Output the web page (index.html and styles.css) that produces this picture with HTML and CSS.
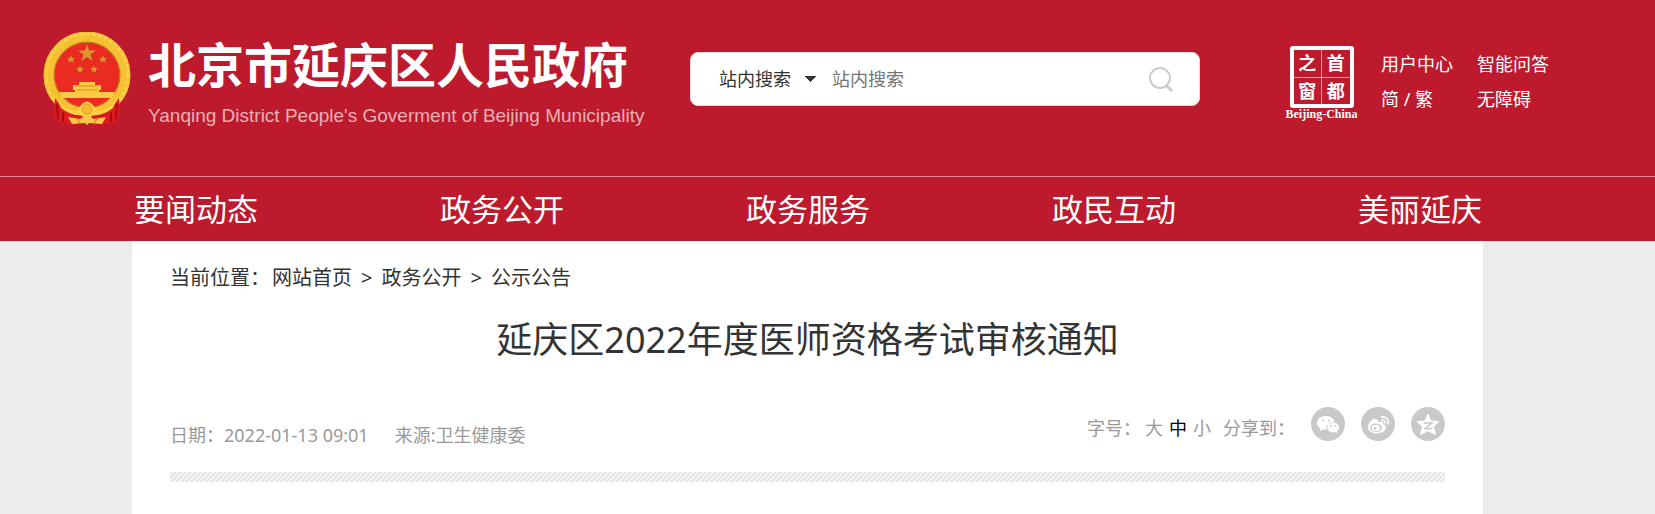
FILE: index.html
```
<!DOCTYPE html>
<html lang="zh-CN">
<head>
    <meta charset="UTF-8">
    <meta name="viewport" content="width=device-width, initial-scale=1.0">
    <title>延庆区2022年度医师资格考试审核通知</title>
    <link rel="stylesheet" href="styles.css">
</head>
<body>
    <header class="header">
        <a class="logo" href="#">
            <svg class="emblem" viewBox="0 0 88 94" aria-hidden="true">
                <circle cx="44" cy="43" r="38" fill="#ea2b22" stroke="#f6c033" stroke-width="11"/>
                <circle cx="44" cy="43" r="41" fill="none" stroke="#fbcf4c" stroke-width="3" stroke-dasharray="4 2"/>
                <circle cx="44" cy="43" r="33" fill="none" stroke="#b8731c" stroke-width="1"/>
                <path d="M44 12 L46 18.500 L53 18.500 L47.500 22.500 L49.500 29 L44 25 L38.500 29 L40.500 22.500 L35 18.500 L42 18.500 Z" fill="#d9992b"/>
                <g fill="#d9992b">
                    <path id="small-star" d="M28 23 L29 26 L32 26 L29.700 28 L30.500 31 L28 29 L25.500 31 L26.300 28 L24 26 L27 26 Z"/>
                    <use href="#small-star" x="32"/>
                    <use href="#small-star" x="9" y="10"/>
                    <use href="#small-star" x="23" y="10"/>
                </g>
                <path d="M36 50 H52 V53 H58 V58 H56 V60 H72 L69 66 H19 L16 60 H32 V58 H30 V53 H36 Z" fill="#fbca45"/>
                <path d="M32 54 H56 M34 58 H54" stroke="#d98b22" stroke-width="1"/>
                <path d="M12 66 Q22 82 40 84 L36 92 Q24 94 16 90 L11 84 Z M76 66 Q66 82 48 84 L52 92 Q64 94 72 90 L77 84 Z" fill="#dd1a1c"/>
                <path d="M14 72 L15 87 M20 80 L20 90 M74 72 L73 87 M68 80 L68 90" stroke="#a80d15" stroke-width="2"/>
                <path d="M14 66 Q22 79 34 79 L38 73 Q44 66 50 73 L54 79 Q66 79 74 66 L70 76 Q60 84 50 83 L44 80 L38 83 Q28 84 18 76 Z" fill="#ffd04a"/>
                <circle cx="44" cy="77" r="5" fill="#f5b932" stroke="#e0a02a"/>
                <path d="M25 85 L37 87 L44 83 L51 87 L63 85 L59 92 L46 91 L44 93 L42 91 L29 92 Z" fill="#f9c944"/>
                <path d="M34 87 L38 92 M54 87 L50 92" stroke="#b96f18"/>
            </svg>
            <span class="logo-text">
                <span class="logo-cn">北京市延庆区人民政府</span>
                <span class="logo-en">Yanqing District People's Goverment of Beijing Municipality</span>
            </span>
        </a>

        <form class="search">
            <select class="search-type" aria-label="搜索范围">
                <option>站内搜索</option>
            </select>
            <input class="search-input" type="text" placeholder="站内搜索" aria-label="站内搜索">
            <button class="search-btn" type="button" aria-label="搜索">
                <svg width="26" height="26" viewBox="0 0 26 26" fill="none" stroke="#ccc" stroke-width="2">
                    <circle cx="12" cy="12" r="10"/>
                    <path d="M18 19 L24 25" stroke-width="3"/>
                </svg>
            </button>
        </form>

        <div class="header-right">
            <a class="seal" href="#">
                <span class="seal-grid">
                    <span>之</span><span>首</span>
                    <span>窗</span><span>都</span>
                </span>
                <span class="seal-name">Beijing-China</span>
            </a>
            <div class="user-links">
                <a href="#">用户中心</a>
                <a href="#">智能问答</a>
                <a href="#">简 / 繁</a>
                <a href="#">无障碍</a>
            </div>
        </div>
    </header>

    <nav class="nav">
        <a href="#">要闻动态</a>
        <a href="#">政务公开</a>
        <a href="#">政务服务</a>
        <a href="#">政民互动</a>
        <a href="#">美丽延庆</a>
    </nav>

    <main class="content">
        <div class="crumbs">
            <span class="crumbs-label">当前位置：</span><a href="#">网站首页</a><span class="sep">&gt;</span><a href="#">政务公开</a><span class="sep">&gt;</span><a href="#">公示公告</a>
        </div>

        <h1>延庆区2022年度医师资格考试审核通知</h1>

        <div class="info">
            <div class="info-left">
                <span>日期：2022-01-13 09:01</span>
                <span>来源:卫生健康委</span>
            </div>
            <div class="info-right">
                <span class="size-label">字号：</span>
                <div class="sizes">
                    <button type="button">大</button>
                    <button type="button" class="active">中</button>
                    <button type="button">小</button>
                </div>
                <span class="share-label">分享到：</span>
                <div class="share">
                    <a href="#" aria-label="微信">
                        <svg viewBox="0 0 34 34">
                            <path d="M15 9 C9.500 9 6 12 6 16 C6 18.500 7.500 20.300 9.500 21.500 L9 24 L12 22.600 L15 23 C15 18.500 18.500 15.500 23.500 15.500 C23 11.500 19.500 9 15 9 Z" fill="#fff"/>
                            <path d="M22 15.500 C18.500 15.500 16 17.800 16 20.500 C16 23.500 18.500 25.500 22 25.500 L24 25.300 L27 26.500 L26.300 24.300 C27.500 23.300 28.300 22 28.300 20.500 C28.300 17.800 25.500 15.500 22 15.500 Z" fill="#fff" stroke="#c9c9c9" stroke-width="0.500"/>
                            <g fill="#c9c9c9"><circle cx="12" cy="13.500" r="1"/><circle cx="18" cy="13.500" r="1"/><circle cx="20" cy="19" r="1"/><circle cx="24.500" cy="19" r="1"/></g>
                        </svg>
                    </a>
                    <a href="#" aria-label="微博">
                        <svg viewBox="0 0 34 34" fill="none">
                            <path d="M15 12 C12 10.500 7 16 7 20 C7 24 11 26.500 15.500 26.500 C21 26.500 25 23.500 25 20.500 C25 18.500 23.500 17.600 22 17.300 C22.800 15 21.500 13.500 17 15.300 C17.400 13.500 16.800 12.300 15 12 Z" fill="#fff"/>
                            <ellipse cx="15" cy="20.800" rx="5.800" ry="4.300" fill="#c9c9c9"/>
                            <ellipse cx="14.800" cy="21" rx="4" ry="3.200" fill="#fff"/>
                            <circle cx="14" cy="21.500" r="1.400" fill="#c9c9c9"/>
                            <path d="M20 10.200 C25 8.800 28.500 12.500 27 17.500 M20.500 13.300 C23 12.600 24.700 14 24 16.600" stroke="#fff" stroke-width="1.500"/>
                        </svg>
                    </a>
                    <a href="#" aria-label="QQ空间">
                        <svg viewBox="0 0 34 34">
                            <path d="M17 7 L20 14 L28 14.500 L22.500 19.500 L24.500 27.500 L17 23.700 L9.500 27.500 L11.500 19.500 L6 14.500 L14 14 Z" fill="#fff" stroke="#fff" stroke-linejoin="round"/>
                            <path d="M12.500 16 H21 L14 21.500 Q18 22 21.500 21" fill="none" stroke="#c9c9c9" stroke-width="1.500"/>
                        </svg>
                    </a>
                </div>
            </div>
        </div>

        <div class="stripe"></div>
    </main>
</body>
</html>
```
FILE: styles.css
```
* {
    box-sizing: border-box;
    margin: 0;
    padding: 0;
}

body {
    font-family: "Noto Sans", "Noto Sans CJK SC", sans-serif;
    font-size: 18px;
    color: #333;
    background-color: #ececec;
    min-height: 100vh;
    display: flex;
    flex-direction: column;
}

a {
    color: inherit;
    text-decoration: none;
}

button, input, select {
    font: inherit;
    color: inherit;
    border: none;
    background: none;
    outline: none;
}

button {
    cursor: pointer;
}

/* header */
.header {
    display: flex;
    align-items: flex-start;
    padding: 32px 106px 44px 43px;
    background-color: #bd1a2d;
    color: #fff;
}

.logo {
    display: flex;
    gap: 17px;
    flex: none;
}

.emblem {
    width: 88px;
    height: 94px;
}

.logo-text {
    display: flex;
    flex-direction: column;
    gap: 8px;
    width: 492px;
    white-space: nowrap;
}

.logo-cn {
    font-family: "Noto Sans CJK SC", sans-serif;
    font-size: 48px;
    font-weight: bold;
    line-height: 60px;
}

.logo-en {
    font-family: "Liberation Sans", Arial, sans-serif;
    font-size: 19px;
    line-height: 32px;
    color: #eab0b7;
}

.search {
    flex: 1;
    display: flex;
    align-items: center;
    height: 54px;
    margin: 20px 86px 0 50px;
    padding: 0 25px 0 28px;
    background-color: #fff;
    border: 1px solid #ddd;
    border-radius: 8px;
    color: #333;
}

.search-type {
    appearance: none;
    width: 97px;
    background: linear-gradient(to bottom right, #333 50%, transparent 50%) right 0 center / 6px 6px no-repeat,
        linear-gradient(to bottom left, #333 50%, transparent 50%) right 6px center / 6px 6px no-repeat;
}

.search-input {
    flex: 1;
    min-width: 0;
    padding-left: 16px;
}

.search-input::placeholder {
    color: #757575;
}

.search-btn {
    display: flex;
}

.header-right {
    display: flex;
    flex: none;
    gap: 24px;
    padding-top: 14px;
}

.seal {
    display: flex;
    flex-direction: column;
    align-items: center;
    width: 71px;
}

.seal-grid {
    display: grid;
    grid-template-columns: 1fr 1fr;
    gap: 1px;
    width: 64px;
    height: 62px;
    border: 4px solid #fff;
    border-radius: 3px;
    background-color: #e5a0a8;
}

.seal-grid span {
    background-color: #bd1a2d;
    font-size: 18px;
    font-weight: bold;
    line-height: 26px;
    text-align: center;
}

.seal-name {
    font-family: "Liberation Serif", serif;
    font-size: 12px;
    font-weight: bold;
    line-height: 12px;
    white-space: nowrap;
}

.user-links {
    display: grid;
    grid-template-columns: 72px 72px;
    align-content: start;
    column-gap: 24px;
    padding-top: 1px;
    line-height: 35px;
    white-space: nowrap;
}

/* main menu */
.nav {
    display: flex;
    gap: 182px;
    padding-left: 134px;
    background-color: #bd1a2d;
    border-top: 1px solid #e8808c;
    color: #fff;
    font-size: 31px;
    line-height: 64px;
    white-space: nowrap;
}

/* article */
.content {
    flex: 1;
    margin: 0 172px 0 132px;
    padding: 22px 38px 32px;
    background-color: #fff;
}

.crumbs {
    font-size: 20px;
    line-height: 30px;
}

.crumbs-label {
    margin-right: 2px;
}

.sep {
    margin: 0 9px;
}

h1 {
    margin-top: 21px;
    font-size: 36px;
    font-weight: normal;
    line-height: 52px;
    text-align: center;
}

.info {
    display: flex;
    justify-content: space-between;
    margin-top: 41px;
    color: #999;
}

.info-left {
    display: flex;
    gap: 26px;
    padding-top: 14px;
    line-height: 28px;
}

.info-right {
    display: flex;
    line-height: 42px;
}

.sizes {
    display: flex;
    gap: 6px;
    margin: 0 12px 0 4px;
}

.sizes .active {
    color: #000;
}

.share {
    display: flex;
    gap: 16px;
    margin-left: 16px;
}

.share a {
    width: 34px;
    height: 34px;
    border-radius: 50%;
    background-color: #c9c9c9;
}

.share svg {
    display: block;
}

.stripe {
    height: 10px;
    margin-top: 23px;
    background: linear-gradient(135deg, #e4e4e4 25%, #fafafa 25% 50%, #e4e4e4 50% 75%, #fafafa 75%) 0 0 / 5px 5px;
}
```
